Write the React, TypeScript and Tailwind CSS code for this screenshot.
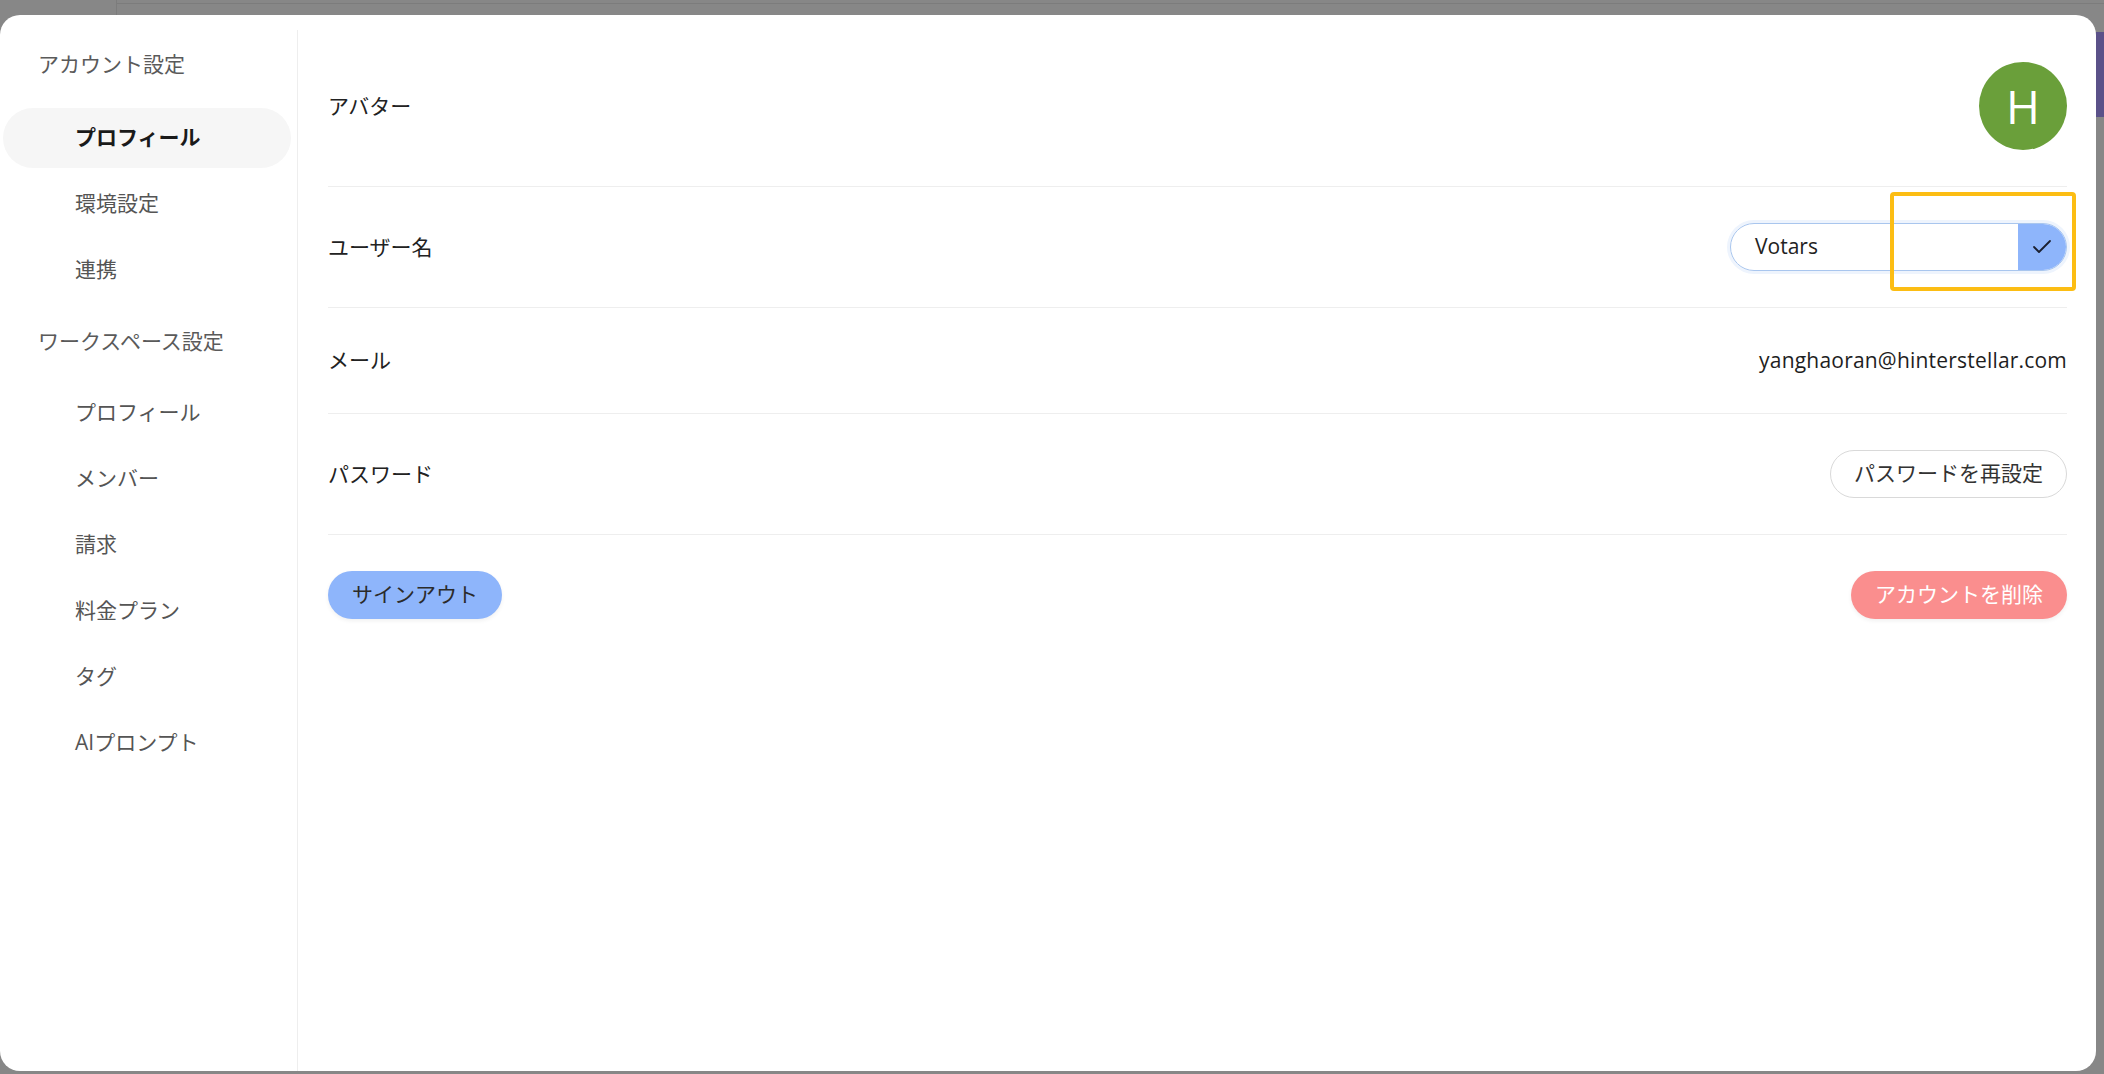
import { Check } from "lucide-react";

const font = "font-['Open_Sans','Noto_Sans_CJK_JP',sans-serif]";

interface navItem {
  label: string;
  active?: boolean;
}

const accountItems: navItem[] = [
  { label: "プロフィール", active: true },
  { label: "環境設定" },
  { label: "連携" },
];

const workspaceItems: navItem[] = [
  { label: "プロフィール" },
  { label: "メンバー" },
  { label: "請求" },
  { label: "料金プラン" },
  { label: "タグ" },
  { label: "AIプロンプト" },
];

function NavItem(props: navItem) {
  return (
    <div
      className={
        "ml-[3px] mb-[6px] flex h-[60px] w-[288px] items-center rounded-full pl-[72px] text-[21px] " +
        (props.active ? "bg-[#f6f6f6] font-bold text-[#1a1a1a]" : "text-[#555555]")
      }
    >
      {props.label}
    </div>
  );
}

function Row(props: { label: string; children: React.ReactNode; className?: string }) {
  return (
    <div className={"relative flex items-center justify-between border-b border-[#eeeeee] py-[36px] " + (props.className ?? "")}>
      <span className="text-[21px] leading-[33px] text-[#222222]">{props.label}</span>
      {props.children}
    </div>
  );
}

export default function App() {
  return (
    <div className={"flex h-[1074px] w-[2104px] flex-col overflow-hidden bg-[#878787] " + font}>
      {/* page behind the overlay */}
      <div className="flex h-[15px] shrink-0">
        <div className="w-[117px] border-r border-[#7c7c7c]" />
        <div className="flex-1">
          <div className="h-[4px] border-b border-[#7c7c7c]" />
        </div>
      </div>

      <div className="flex h-[1056px] shrink-0">
        <div className="flex w-[2096px] rounded-[20px] bg-white">
          {/* sidebar */}
          <aside className="mt-[15px] flex w-[298px] shrink-0 flex-col border-r border-[#eeeeee] pt-[15px]">
            <div className="mb-[23px] flex h-[40px] items-center pl-[38px] text-[21px] text-[#5a5a5a]">アカウント設定</div>
            {accountItems.map((item) => (
              <NavItem key={"a" + item.label} {...item} />
            ))}
            <div className="mt-[16px] mb-[21px] flex h-[40px] items-center pl-[38px] text-[21px] text-[#5a5a5a]">ワークスペース設定</div>
            {workspaceItems.map((item) => (
              <NavItem key={"w" + item.label} {...item} />
            ))}
          </aside>

          {/* content */}
          <main className="flex flex-1 flex-col pt-[11px] pl-[30px] pr-[29px]">
            <Row label="アバター">
              <div className="flex h-[88px] w-[88px] items-center justify-center rounded-full bg-[#6a9f3a] text-[46px] leading-none text-white">
                H
              </div>
            </Row>

            <Row label="ユーザー名">
              <div className="flex h-[48px] w-[337px] overflow-hidden rounded-full border border-[#a9c6ee] shadow-[0_0_0_3px_#eef4fd]">
                <div className="flex flex-1 items-center pl-[24px] text-[21px] text-[#222222]">Votars</div>
                <div className="flex w-[48px] items-center justify-center bg-[#8eb5fb]">
                  <Check size={24} strokeWidth={1.8} className="text-[#1b2030]" />
                </div>
              </div>
              <div className="absolute top-[5px] right-[-9px] h-[99px] w-[186px] rounded-[4px] border-[4px] border-[#fcbd13]" />
            </Row>

            <Row label="メール">
              <span className="text-[21px] leading-[33px] tracking-[0.2px] text-[#1e1e1e]">yanghaoran@hinterstellar.com</span>
            </Row>

            <Row label="パスワード">
              <button className="flex h-[48px] items-center rounded-full border border-[#d9d9d9] px-[23px] text-[21px] text-[#333333]">
                パスワードを再設定
              </button>
            </Row>

            <div className="flex items-center justify-between pt-[36px]">
              <button className="flex h-[48px] items-center rounded-full bg-[#8eb5fb] px-[24px] text-[21px] text-[#2b2b2b] shadow-[0_2px_4px_rgba(0,0,0,0.06)]">
                サインアウト
              </button>
              <button className="flex h-[48px] items-center rounded-full bg-[#fa8e8e] px-[24px] text-[21px] text-white shadow-[0_2px_4px_rgba(0,0,0,0.06)]">
                アカウントを削除
              </button>
            </div>
          </main>
        </div>

        {/* sliver of page at the right edge */}
        <div className="flex w-[8px] flex-col">
          <div className="mt-[17px] h-[85px] bg-[#5b5189]" />
        </div>
      </div>
    </div>
  );
}
